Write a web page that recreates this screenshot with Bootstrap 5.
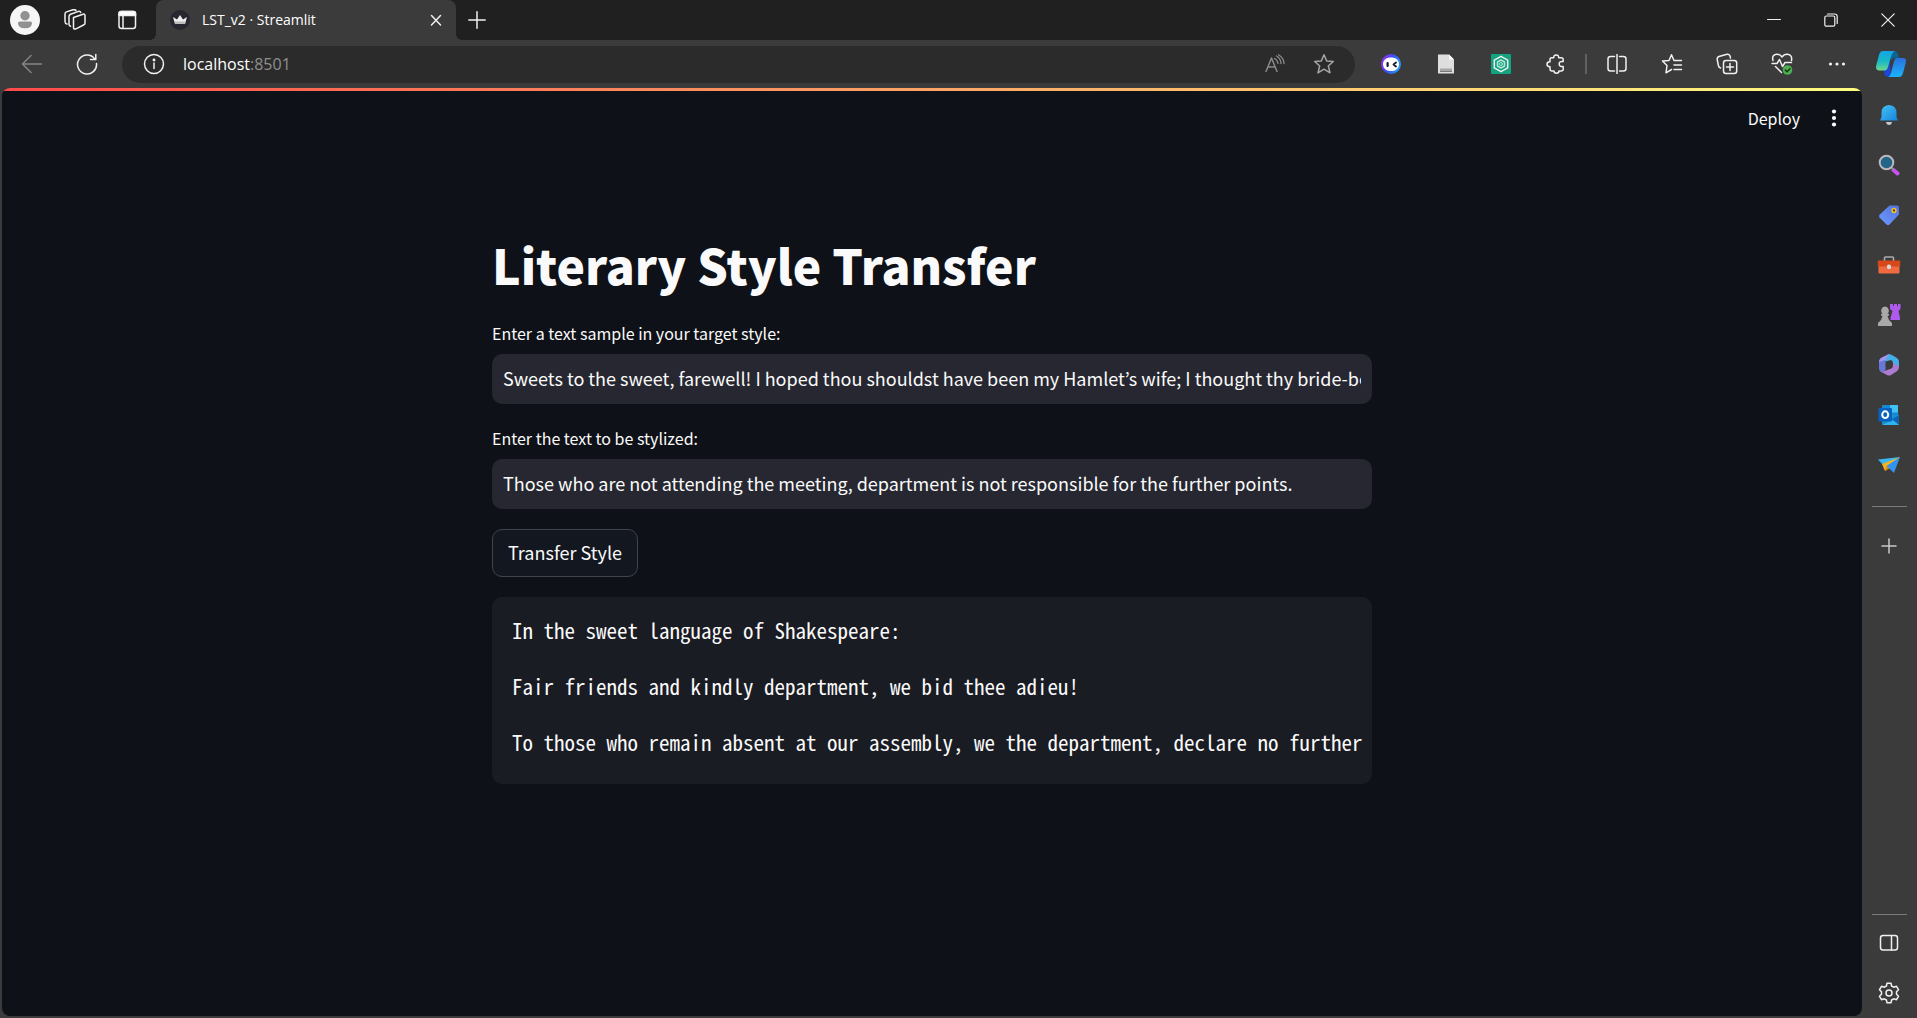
<!DOCTYPE html>
<html lang="en">
<head>
<meta charset="utf-8">
<meta name="viewport" content="width=device-width, initial-scale=1">
<title>LST_v2 · Streamlit</title>
<link href="https://cdn.jsdelivr.net/npm/bootstrap@5.3.0/dist/css/bootstrap.min.css" rel="stylesheet">
<style>
  body { background: #3b3b3b; color: #fff; font-family: "Open Sans", "Noto Sans", sans-serif; }
  svg { display: block; fill: none; stroke: #f0f0f0; stroke-width: 1.5; stroke-linecap: round; stroke-linejoin: round; flex: none; }
  .plain-btn { background: none; border: 0; padding: 0; color: inherit; display: flex; align-items: center; justify-content: center; flex: none; }

  .tab-strip { background: #202020; height: 40px; }
  .strip-tools { width: 156px; padding-left: 10px; }
  .browser-tab { width: 300px; height: 40px; background: #3b3b3b; border-radius: 8px 8px 0 0; padding: 0 12px 0 14px; font-size: 14px; line-height: 20px; position: relative; }
  .browser-tab::before, .browser-tab::after { content: ""; position: absolute; bottom: 0; width: 6px; height: 6px; }
  .browser-tab::before { left: -6px; background: radial-gradient(circle at 0 0, #202020 6px, #3b3b3b 6px); }
  .browser-tab::after { right: -6px; background: radial-gradient(circle at 100% 0, #202020 6px, #3b3b3b 6px); }
  .win-btns { padding-right: 1px; }
  .win-btn { width: 57px; height: 40px; }

  .toolbar { height: 48px; }
  .nav-btn { width: 55px; height: 48px; }
  .address { height: 37px; border-radius: 19px; background: #2b2b2b; padding: 0 7px 0 21px; margin: 0 8px; font-size: 16px; line-height: 24px; }
  .address input { background: none; border: 0; padding: 0; color: #fff; width: 67px; margin-left: 18px; outline: 0; line-height: 24px; }
  .address .port { color: #8f8f8f; }
  .pill-btn { width: 49px; height: 37px; }
  .bar-rule { width: 2px; height: 20px; margin: 0 2px; background: #606060; }
  .copilot { width: 53px; height: 48px; }

  .app { background: #0e1117; border-radius: 8px; margin: 0 0 2px 2px; overflow: hidden; color: #fafafa; font-family: "Source Sans Pro", "Noto Sans CJK KR", "Noto Sans", sans-serif; }
  .decoration { height: 3px; background: linear-gradient(90deg, #ff4b4b, #fffd80); }
  .app-head { height: 56px; padding: 0 15px 2px 0; font-size: 16px; line-height: 24px; }
  .app-head .menu { width: 26px; height: 30px; margin-left: 21px; }
  .app-main { width: 100%; max-width: 880px; margin: 0 auto; padding-top: 84px; }
  .app-main h1 { font-size: 48px; line-height: 66px; font-weight: 900; margin: 0 0 25px; }
  .field-label { display: block; font-size: 16px; line-height: 22px; margin: 0 0 10px; }
  .app-main .form-control { height: 50px; background: #262730; color: #fafafa; border: 0; border-radius: 10px; font-size: 18px; line-height: 28px; padding: 10px 11px 12px; margin: 0 0 23px; box-shadow: none; }
  .app-main .last-field { margin-bottom: 20px; }
  .app-main .btn { height: 48px; background: #131720; border: 1px solid #41444c; border-radius: 10px; color: #fafafa; font-size: 18px; line-height: 28px; padding: 0 15px 2px; }
  .output { background: #1a1c24; border-radius: 10px; margin: 20px 0 0; padding: 19px 10px 28px 20px; min-height: 187px; color: #fafafa; font-family: "Noto Sans Mono CJK SC", "Liberation Mono", monospace; font-size: 21px; line-height: 28px; overflow: hidden; }

  .side { width: 55px; padding: 2px 1px 0 0; }
  .side .plain-btn { width: 54px; height: 50px; }
  .side hr { width: 35px; margin: 0 0 0 10px; border: 0; border-top: 1px solid #7a7a7a; opacity: 1; }
  .side .after-rule { margin-top: 14px; }
  .side .foot-first { margin-top: 3px; }
</style>
</head>
<body class="vh-100 d-flex flex-column overflow-hidden">

<header>
  <div class="tab-strip d-flex align-items-center">
    <div class="strip-tools d-flex align-items-center flex-shrink-0">
      <button class="plain-btn" aria-label="Profile">
        <svg width="30" height="30" viewBox="0 0 30 30" style="stroke:none"><circle cx="15" cy="15" r="15" fill="#f6f6f6"/><circle cx="15" cy="10.700" r="4.700" fill="#919191"/><path d="M8 18.300Q8 16.500 9.800 16.500H20.200Q22 16.500 22 18.300Q22 23.300 15 23.300T8 18.300Z" fill="#919191"/></svg>
      </button>
      <button class="plain-btn ms-4" aria-label="Workspaces">
        <svg width="22" height="22" viewBox="0 0 22 22"><path d="M9.500 8.500 19 5.200Q21 4.700 21 6.700V14Q21 15.500 19.500 16L12 19.800Q9.500 20.800 9.500 18.500V8.500M6.500 17.300Q5 17 5 15V7.500Q5 6 6.500 5.300L14.500 2.400Q16.300 2 16.800 3.400M3 15Q1 14.500 1 12.500V5Q1 3.500 2.500 2.900L9 .8Q11 .3 12 1.500"/></svg>
      </button>
      <button class="plain-btn ms-auto me-3" aria-label="Tab actions">
        <svg width="26" height="20" viewBox="0 0 26 20"><rect x="5" y="1.500" width="16.500" height="17" rx="2.500"/><path d="M5 3.500Q5 1.500 7 1.500H19.500Q21.500 1.500 21.500 3.500V5.500H5Z" fill="#fff"/><path d="M9 6V18"/></svg>
      </button>
    </div>
    <div class="browser-tab d-flex align-items-center flex-shrink-0">
      <svg width="20" height="20" viewBox="0 0 20 20" style="stroke:none"><circle cx="10" cy="10" r="10" fill="#262730"/><path d="M3 7 7 9.500 10 5 13 9.500 17 7 15 14H5Z" fill="#eee"/><path d="M5 11.500H15.700L15 14H5Z" fill="#bbb"/></svg>
      <span class="ms-2 ps-1 text-nowrap">LST_v2 · Streamlit</span>
      <button class="plain-btn ms-auto" aria-label="Close tab"><svg width="16" height="16" viewBox="0 0 16 16"><path d="M3.500 3.500 12.500 13M12.500 3.500 3.500 13"/></svg></button>
    </div>
    <button class="plain-btn ms-2 ps-1" aria-label="New tab"><svg width="18" height="18" viewBox="0 0 18 18"><path d="M9 .8V17.200M.8 9H17.200"/></svg></button>
    <div class="win-btns d-flex ms-auto">
      <button class="plain-btn win-btn" aria-label="Minimize"><svg width="14" height="14" viewBox="0 0 14 14"><path d="M.5 6.500H13.500" style="stroke-width:1"/></svg></button>
      <button class="plain-btn win-btn" aria-label="Restore"><svg width="14" height="14" viewBox="0 0 14 14" style="stroke-width:1.200"><rect x=".8" y="3" width="10" height="10.200" rx="1.500"/><path d="M3.500 1H10.500Q13.200 1 13.200 3.500V10.500"/></svg></button>
      <button class="plain-btn win-btn" aria-label="Close"><svg width="14" height="14" viewBox="0 0 14 14"><path d="M.8 .8 13.200 13.200M13.200 .8 .8 13.200" stroke-width="1.200"/></svg></button>
    </div>
  </div>

  <div class="toolbar d-flex align-items-center">
    <div class="d-flex ps-1">
      <button class="plain-btn nav-btn" aria-label="Back"><svg width="22" height="20" viewBox="0 0 22 20" style="stroke:#858585"><path d="M20.500 10H1.500M10 1.500 1.500 10 10 18.500"/></svg></button>
      <button class="plain-btn nav-btn" aria-label="Refresh"><svg width="22" height="22" viewBox="0 0 22 22"><path d="M20.500 10.500A9.500 9.500 0 1 1 18.800 6M19.800 1.500V6.500H14.500"/></svg></button>
    </div>
    <div class="address d-flex align-items-center flex-grow-1">
      <svg width="22" height="22" viewBox="0 0 22 22"><circle cx="11" cy="11" r="9.500"/><path d="M11 10V15.500"/><circle cx="11" cy="7" r=".7" fill="#fff"/></svg>
      <input type="text" value="localhost" aria-label="Address"><span class="port">:8501</span>
      <div class="d-flex ms-auto">
        <button class="plain-btn pill-btn" aria-label="Read aloud"><svg width="20" height="20" viewBox="0 0 20 20" style="stroke:#8b8b8b"><path d="M1 17.500 6.500 4 12 17.500M3 13H10"/><path d="M9.500 4.500Q12.500 6 13 9.500M11.500 2Q15.500 4 16 9.500M13.500 .8Q18.500 3.500 19 9.500" stroke-width="1.300"/></svg></button>
        <button class="plain-btn pill-btn" aria-label="Add to favorites"><svg width="22" height="22" viewBox="0 0 22 22" style="stroke:#a5a5a5"><path d="M11 1.800 13.700 8 20.300 8.500 15.300 13 17 19.800 11 16.200 5 19.800 6.700 13 1.700 8.500 8.300 8Z"/></svg></button>
      </div>
    </div>
    <button class="plain-btn nav-btn" aria-label="Chat extension"><svg width="20" height="20" viewBox="0 0 20 20" style="stroke:none"><defs><linearGradient id="ring" x1="0" x2="1" y1=".3" y2=".7"><stop offset="0" stop-color="#9a2df0"/><stop offset=".45" stop-color="#3d4df5"/><stop offset="1" stop-color="#22a7f5"/></linearGradient></defs><circle cx="10" cy="10" r="10" fill="url(#ring)"/><rect x="2" y="3.500" width="16" height="13.500" rx="6.700" fill="#fff"/><rect x="5.500" y="8" width="2.200" height="5" rx="1" fill="#181828"/><path d="M15 8.500 12.500 10.500 15 12.500" fill="none" stroke="#181828" stroke-width="1.800"/></svg></button>
    <button class="plain-btn nav-btn" aria-label="Document extension"><svg width="18" height="20" viewBox="0 0 18 20" style="stroke:none"><path d="M1 .5H12L17 5.500V19.500H1Z" fill="#dedede"/><path d="M12 .5V5.500H17Z" fill="#fff"/><path d="M3 14.500H15V17.500H3Z" fill="#a6a6a6"/><path d="M3 17H15V18H3Z" fill="#777"/></svg></button>
    <button class="plain-btn nav-btn" aria-label="Hexagon extension"><svg width="20" height="20" viewBox="0 0 20 20"><rect width="20" height="20" rx="1" fill="#13a37f" stroke="none"/><path d="M10 2.300 16.700 6.100V13.900L10 17.700 3.300 13.900V6.100Z"/><path d="M10 6 13.500 8V12L10 14 6.500 12V8Z" stroke="#b5e5d5"/><circle cx="10" cy="10" r="1.500" stroke="#b5e5d5" stroke-width="1"/></svg></button>
    <button class="plain-btn nav-btn" aria-label="Extensions"><svg width="20" height="20" viewBox="0 0 20 20"><path d="M5.500 3.800H7.700Q7.500 1 10.200 1T12.700 3.800H15.200Q17.200 3.800 17.200 5.800V7.500Q13.200 7 13.200 10T17.200 12.500V15Q17.200 17 15.200 17H13Q13 19.200 10.500 19.200T8 17H6Q4 17 4 15V12.800Q1 12.800 1 10.300T4 7.800V5.300Q4 3.800 5.500 3.800Z"/></svg></button>
    <span class="bar-rule"></span>
    <button class="plain-btn nav-btn" aria-label="Split screen"><svg width="20" height="20" viewBox="0 0 20 20"><path d="M10 .5V19.500M7.500 2.500H3.500Q1 2.500 1 5V14.500Q1 17 3.500 17H7.500M12.500 2.500H16.500Q19 2.500 19 5V14.500Q19 17 16.500 17H12.500"/></svg></button>
    <button class="plain-btn nav-btn" aria-label="Favorites"><svg width="22" height="22" viewBox="0 0 22 22"><path d="M14 7.500H13L10.500 1.800 8 7.500 1.500 8 6 12.500 5 19.800 10.500 16.500M13 7.500H20.500M13 12H20.500M13 16.500H20.500"/></svg></button>
    <button class="plain-btn nav-btn" aria-label="Collections"><svg width="22" height="22" viewBox="0 0 22 22"><rect x="7.500" y="7.500" width="13.200" height="13" rx="2.500"/><path d="M14 10.500V17.500M10.500 14H17.500M4.500 15Q2.800 14.500 2.400 12.500L1.200 6.500Q1 4.200 3 3.500L11 1.200Q13.300 1 14 3L14.500 5"/></svg></button>
    <button class="plain-btn nav-btn" aria-label="Browser essentials"><svg width="24" height="24" viewBox="0 0 24 24"><path d="M3 8.500Q1.500 3 6.500 2.200 10 2 12 5 14 2 17.500 2.200 22.500 3 21.500 8.500M2 11.500H7L9.500 7.500 12.500 14.500 15 10.500H21.500M5.500 14.500 11.500 20.500"/><circle cx="17.500" cy="18" r="4.800" fill="#4caf50" stroke="none"/><path d="M15.300 18 17 19.700 20 16.700" stroke="#173b19"/></svg></button>
    <button class="plain-btn nav-btn" aria-label="More"><svg width="18" height="6" viewBox="0 0 18 6" style="stroke:none;fill:#f0f0f0"><circle cx="2.500" cy="3" r="1.600"/><circle cx="9" cy="3" r="1.600"/><circle cx="15.500" cy="3" r="1.600"/></svg></button>
    <button class="plain-btn copilot" aria-label="Copilot"><svg width="32" height="28" viewBox="0 0 32 28" style="stroke:none"><defs><linearGradient id="cpa" x1="0" x2="0" y1="0" y2="1"><stop offset="0" stop-color="#12a5e8"/><stop offset=".55" stop-color="#1bb9c4"/><stop offset="1" stop-color="#6fd98a"/></linearGradient><linearGradient id="cpb" x1="0" x2="0" y1="0" y2="1"><stop offset="0" stop-color="#2a70e0"/><stop offset="1" stop-color="#19b4f7"/></linearGradient></defs><path d="M15 1H19Q22 1 23 4L24 8H20Q17 8 16 11Z" fill="#0a6593"/><path d="M9 20 15 11 16 27H14Q10 27 9.500 24Z" fill="#1b46d8"/><path d="M8 1H20Q17.500 2 16.500 5L13 17Q12 20.500 9 20.500H4Q0 20 1.300 15L4 5Q5 1 8 1Z" fill="url(#cpa)"/><path d="M22 8H28Q32 8 30.700 13L28 23Q27 27 24 27H13Q15 26.500 16 23L19 11Q20 8 22 8Z" fill="url(#cpb)"/></svg></button>
  </div>
</header>

<div class="d-flex flex-grow-1">
  <div class="app flex-grow-1">
    <div class="decoration"></div>
    <div class="app-head d-flex align-items-center justify-content-end">
      <button class="plain-btn">Deploy</button>
      <button class="plain-btn menu" aria-label="Menu"><svg width="6" height="18" viewBox="0 0 6 18" style="stroke:none;fill:#fafafa"><circle cx="3" cy="2.500" r="2.100"/><circle cx="3" cy="9" r="2.100"/><circle cx="3" cy="15.500" r="2.100"/></svg></button>
    </div>
    <main class="app-main">
      <h1>Literary Style Transfer</h1>
      <label class="field-label" for="sample">Enter a text sample in your target style:</label>
      <input class="form-control" id="sample" type="text" value="Sweets to the sweet, farewell! I hoped thou shouldst have been my Hamlet’s wife; I thought thy bride-bed to have deck’d">
      <label class="field-label" for="source">Enter the text to be stylized:</label>
      <input class="form-control last-field" id="source" type="text" value="Those who are not attending the meeting, department is not responsible for the further points.">
      <button class="btn d-block" type="button">Transfer Style</button>
      <pre class="output">In the sweet language of Shakespeare:

Fair friends and kindly department, we bid thee adieu!

To those who remain absent at our assembly, we the department, declare no further</pre>
    </main>
  </div>

  <aside class="side d-flex flex-column flex-shrink-0">
    <button class="plain-btn" aria-label="Notifications"><svg width="20" height="22" viewBox="0 0 20 22" style="stroke:none"><defs><linearGradient id="bell" x1="0" x2="1" y1="0" y2="1"><stop offset="0" stop-color="#45c4f5"/><stop offset="1" stop-color="#1583dc"/></linearGradient></defs><path d="M7 18H13Q12.500 21 10 21T7 18Z" fill="#c5c8cc"/><path d="M10 1Q17.500 1.500 17.500 9V13L19 16.500H1L2.500 13V9Q2.500 1.500 10 1Z" fill="url(#bell)"/></svg></button>
    <button class="plain-btn" aria-label="Search"><svg width="22" height="22" viewBox="0 0 22 22"><path d="M15.500 16 19.500 19.500" stroke="#c553f2" style="stroke:#c553f2;stroke-width:4"/><path d="M12.500 12.500 15 15" style="stroke:#8a8a8a;stroke-width:2"/><circle cx="8.500" cy="8.500" r="6.800" fill="#246489" style="stroke:#b9b9b9;stroke-width:2"/></svg></button>
    <button class="plain-btn" aria-label="Shopping"><svg width="22" height="22" viewBox="0 0 22 22" style="stroke:none"><defs><linearGradient id="tag" x1="0" x2="1" y1="1" y2="0"><stop offset="0" stop-color="#6d9bff"/><stop offset="1" stop-color="#5470dc"/></linearGradient></defs><path d="M11.500 1.500H19Q21 1.500 21 3.500V10.500L11.500 20.500Q10 21.500 8.500 20.500L1.500 13.500Q.5 12 1.800 10.500Z" fill="url(#tag)"/><circle cx="16" cy="6.500" r="1.900" fill="#4a4520" stroke="#f2c320" stroke-width="1.500"/></svg></button>
    <button class="plain-btn" aria-label="Tools"><svg width="24" height="20" viewBox="0 0 24 20"><path d="M7.500 6V3Q7.500 2 8.500 2H15.500Q16.500 2 16.500 3V6" stroke="#aaa" stroke-width="1.600"/><rect x="1.500" y="10" width="21" height="8.500" rx="1" fill="#f06a41" stroke="none"/><rect x=".8" y="5.500" width="22.400" height="6" rx="1" fill="#d64719" stroke="none"/><rect x="10" y="9.500" width="4" height="4.500" rx="1.500" fill="#d8d8d8" stroke="none"/></svg></button>
    <button class="plain-btn" aria-label="Games"><svg width="24" height="24" viewBox="0 0 24 24" style="stroke:none"><path d="M13 1H16V3H17V1H20V3H21V1H23.500V6L21.500 8 23 15V17H13.500V15L15.500 8 13 6Z" fill="#b05aed"/><path d="M8 3.500A4 4 0 0 1 10.500 10.500L12 11V12.500L10.500 13 12 17 15 20V23H1V20L4 17 5.500 13 4 12.500V11L5.500 10.500A4 4 0 0 1 8 3.500Z" fill="#a9a9a9"/></svg></button>
    <button class="plain-btn" aria-label="Microsoft 365"><svg width="22" height="22" viewBox="0 0 22 22" style="stroke:none"><path d="M11 0 4 3.500Q1 5 1 8V14Q1 17 4 18.500L7.500 16V8Q7.500 6 9.500 5L13 3Z" fill="#6978d8"/><path d="M10 .5Q12 0 14 1L19 4Q21 5.500 21 8V13L15 10V9Q15 7 13 6L7.500 7.500V5Z" fill="#45aee8"/><path d="M21 12Q21 16 18.500 17.500L13 21Q11 22 9 21L3.500 18 13.500 14.500Q15 13.500 15 11.500V9.500Z" fill="#ad7bd0"/><path d="M11 0 4 3.500Q1 5 1 8L7.500 6Z" fill="#a394ee"/></svg></button>
    <button class="plain-btn" aria-label="Outlook"><svg width="22" height="22" viewBox="0 0 22 22" style="stroke:none"><rect x="4" y="1" width="16" height="15" rx="1" fill="#1689d2"/><path d="M12 1H19Q20 1 20 2V8.500H12Z" fill="#42c2f3"/><path d="M4 10 21 10.500V20Q21 21 20 21H5Q4 21 4 20Z" fill="#168ed8"/><path d="M21 11V21L13 16Z" fill="#0c65b2"/><path d="M4 21 15 16 21 21Z" fill="#30b5f0"/><rect x=".5" y="4" width="13.500" height="13.500" rx="1" fill="#0763bf"/><ellipse cx="7.200" cy="10.700" rx="3" ry="3.400" stroke="#fff" stroke-width="2"/></svg></button>
    <button class="plain-btn" aria-label="Drop"><svg width="24" height="20" viewBox="0 0 24 20" style="stroke:none"><path d="M1 4.500 23 2 7 11Z" fill="#36b9f5"/><path d="M5 9 23 2 8 16Z" fill="#f5b323"/><path d="M23 2 17 18 9.500 11Z" fill="#3293f0"/><path d="M8 16 9.500 11 12.500 13.500Z" fill="#d68a13"/></svg></button>
    <hr class="mt-3">
    <button class="plain-btn after-rule" aria-label="Customize"><svg width="16" height="16" viewBox="0 0 16 16"><path d="M8 1V15M1 8H15" style="stroke:#c9c9c9"/></svg></button>
    <hr class="mt-auto">
    <button class="plain-btn foot-first" aria-label="Toggle sidebar"><svg width="20" height="18" viewBox="0 0 20 18"><rect x="1.500" y="1.500" width="17" height="14.500" rx="2.500"/><path d="M12.500 2V16"/></svg></button>
    <button class="plain-btn" aria-label="Settings"><svg width="22" height="22" viewBox="0 0 22 22"><path d="M9 1.200H13L13.600 4 15.700 5.200 18.500 4.300 20.500 7.700 18.500 9.700V12.300L20.500 14.300 18.500 17.700 15.700 16.800 13.600 18 13 20.800H9L8.400 18 6.300 16.800 3.500 17.700 1.500 14.300 3.500 12.300V9.700L1.500 7.700 3.500 4.300 6.300 5.200 8.400 4Z"/><circle cx="11" cy="11" r="3"/></svg></button>
  </aside>
</div>

<script src="https://cdn.jsdelivr.net/npm/bootstrap@5.3.0/dist/js/bootstrap.bundle.min.js"></script>
</body>
</html>
